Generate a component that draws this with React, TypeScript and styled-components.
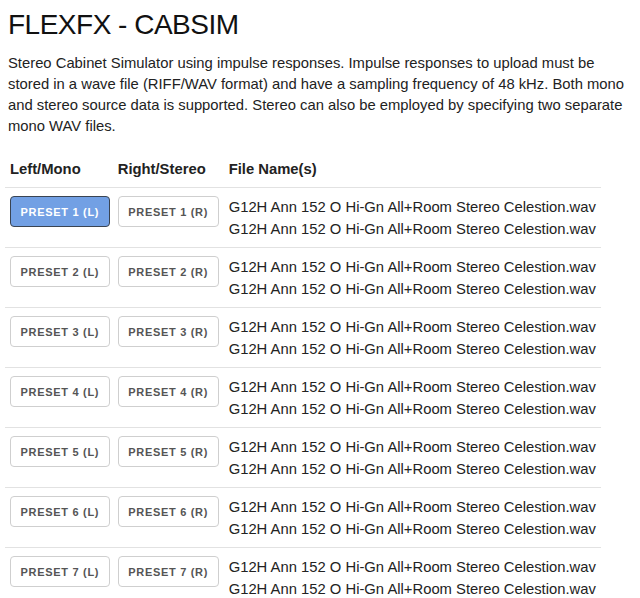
import React from "react";
import styled, { createGlobalStyle } from "styled-components";

const Global = createGlobalStyle`
  html, body { margin: 0; padding: 0; background: #fff; }
  body { font-family: "Liberation Sans", Arial, Helvetica, sans-serif; color: #222; }
`;

const Page = styled.div`
  padding: 0 8px;
`;

const Title = styled.h1`
  margin: 8px 0 0;
  font-size: 28px;
  line-height: 33px;
  letter-spacing: -0.5px;
  font-weight: normal;
  color: #111;
`;

const Intro = styled.p`
  margin: 12px 0 16px;
  font-size: 14.8px;
  line-height: 21px;
  color: #222;
`;

const Table = styled.table`
  border-collapse: collapse;
  margin-left: -3px;
`;

const Th = styled.th<{ $first?: boolean }>`
  text-align: left;
  font-size: 14.8px;
  line-height: 22px;
  font-weight: bold;
  padding: 5px ${(p) => (p.$first ? "3px" : "5px")} 7px 5px;
  color: #222;
`;

const Row = styled.tr`
  border-top: 1px solid #e2e2e2;
`;

const Td = styled.td<{ $first?: boolean }>`
  vertical-align: top;
  padding: 8px ${(p) => (p.$first ? "3px" : "5px")} 7px 5px;
  font-size: 14.8px;
  line-height: 22px;
  color: #222;
`;

const Preset = styled.button<{ $active?: boolean }>`
  display: block;
  height: 31px;
  padding: 0 9.5px;
  border-radius: 4px;
  border: 1px solid ${(p) => (p.$active ? "#3a4452" : "#cfcfcf")};
  background: ${(p) => (p.$active ? "#72a0e4" : "#fff")};
  color: ${(p) => (p.$active ? "#fff" : "#555")};
  font-family: "Liberation Sans", Arial, Helvetica, sans-serif;
  font-size: 11px;
  font-weight: bold;
  letter-spacing: 0.7px;
  white-space: nowrap;
  cursor: pointer;
`;

const FileLine = styled.div`
  white-space: nowrap;
`;

const FILE = "G12H Ann 152 O Hi-Gn All+Room Stereo Celestion.wav";

export default function App() {
  const rows = [1, 2, 3, 4, 5, 6, 7];
  return (
    <Page>
      <Global />
      <Title>FLEXFX - CABSIM</Title>
      <Intro>
        Stereo Cabinet Simulator using impulse responses. Impulse responses to upload must be
        stored in a wave file (RIFF/WAV format) and have a sampling frequency of 48 kHz. Both mono
        and stereo source data is supported. Stereo can also be employed by specifying two separate
        mono WAV files.
      </Intro>
      <Table>
        <thead>
          <tr>
            <Th $first>Left/Mono</Th>
            <Th>Right/Stereo</Th>
            <Th>File Name(s)</Th>
          </tr>
        </thead>
        <tbody>
          {rows.map((n) => (
            <Row key={n}>
              <Td $first>
                <Preset $active={n === 1}>PRESET {n} (L)</Preset>
              </Td>
              <Td>
                <Preset>PRESET {n} (R)</Preset>
              </Td>
              <Td>
                <FileLine>{FILE}</FileLine>
                <FileLine>{FILE}</FileLine>
              </Td>
            </Row>
          ))}
        </tbody>
      </Table>
    </Page>
  );
}
